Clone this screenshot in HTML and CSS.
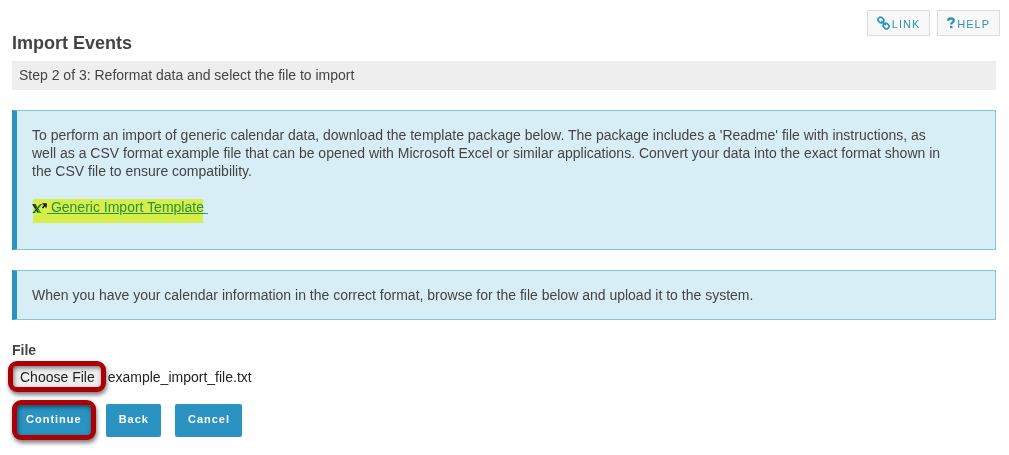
FILE: index.html
```html
<!DOCTYPE html>
<html lang="en">
<head>
<meta charset="utf-8">
<title>Import Events</title>
<link rel="stylesheet" href="styles.css">
</head>
<body>
<header class="header">
  <h1 class="title">Import Events</h1>
  <nav class="tools">
    <a class="tool" href="#link"><svg class="tool-icon" viewBox="0 0 13 14" aria-hidden="true"><g fill="none" stroke="currentColor" stroke-width="1.7"><rect x="1" y="1.6" width="5.8" height="4.8" rx="2.2" transform="rotate(40 3.9 4)"/><rect x="6.2" y="7.6" width="5.8" height="4.8" rx="2.2" transform="rotate(40 9.1 10)"/><path d="M4.4 5.2l4.4 3.8"/></g></svg>LINK</a>
    <a class="tool" href="#help"><svg class="tool-icon tool-icon-help" viewBox="0 0 8 12" aria-hidden="true"><path d="M1 3.8C1.3 1.9 2.4 1.5 4 1.5s2.7.8 2.7 2.1c0 1.8-2.5 1.8-2.5 3.9" fill="none" stroke="currentColor" stroke-width="2.3"/><path d="M3 8.8h2.4v2.4H3z" fill="currentColor"/></svg>HELP</a>
  </nav>
</header>
<main class="main">
  <p class="step">Step 2 of 3: Reformat data and select the file to import</p>
  <section class="notice notice-template">
    <p class="notice-text">To perform an import of generic calendar data, download the template package below. The package includes a 'Readme' file with instructions, as well as a CSV format example file that can be opened with Microsoft Excel or similar applications. Convert your data into the exact format shown in the CSV file to ensure compatibility.</p>
    <p class="notice-text download"><a class="template-link" href="#template"><svg class="excel-icon" viewBox="0 0 15 12" aria-hidden="true"><path d="M0 2h3.5l5.5 9H5.5z" fill="#4a4a50"/><path d="M8 2h2L3 11H0z" fill="#2fb060"/><path d="M6 7.5L9.5 11H6z" fill="#2fb060"/><path d="M1 2.5l5.5 8M9 2.5L1.5 11" stroke="#111" stroke-width="1" stroke-dasharray="1.5 1"/><path d="M10.5 6l3-3.5M10.5 2h3.5v3.5" fill="none" stroke="#111" stroke-width="1.5"/></svg><span class="link-text">&nbsp;Generic Import Template&nbsp;</span></a></p>
  </section>
  <section class="notice">
    <p class="notice-text">When you have your calendar information in the correct format, browse for the file below and upload it to the system.</p>
  </section>
  <form class="form">
    <div class="form-label" id="file-label">File</div>
    <div class="file-row">
      <input class="file-input" type="file" id="file" aria-labelledby="file-label choose-file">
      <label class="choose marked" for="file" id="choose-file">Choose File</label>
      <span class="filename">example_import_file.txt</span>
    </div>
    <div class="actions">
      <span class="ring marked"><button class="button" type="submit">Continue</button></span>
      <button class="button" type="button">Back</button>
      <button class="button" type="button">Cancel</button>
    </div>
  </form>
</main>
</body>
</html>
```
FILE: styles.css
```css
* { box-sizing: border-box; }

body {
  margin: 0;
  background: #fff;
  color: #444;
  font: 14px/18px "Liberation Sans", Arial, sans-serif;
}

.header {
  display: flex;
  justify-content: space-between;
  align-items: flex-start;
  padding: 10px 9px 7px 12px;
}

.title {
  margin: 0;
  padding-top: 23px;
  font-size: 18px;
  line-height: 21px;
}

.tools { display: flex; gap: 7px; }

.tool {
  display: flex;
  align-items: center;
  height: 26px;
  padding: 1px 9px 0;
  border: 1px solid #ddd;
  background: #f8f8f8;
  color: #2a93c1;
  font-size: 11px;
  letter-spacing: 1px;
  text-decoration: none;
}

.tool-icon { width: 13px; height: 14px; margin: 0 2px 2px 0; }
.tool-icon-help { width: 8px; height: 12px; }

.main { padding: 0 13px 16px 12px; }

.step {
  margin: 0 0 20px;
  padding: 5px 7px 6px;
  background: #eee;
}

.notice {
  margin-bottom: 20px;
  padding: 15px 45px 15px 15px;
  border: 1px solid #82c7e3;
  border-left: 5px solid #2a93c1;
  background: #d8eef6;
}

.notice-template { padding-bottom: 31px; }
.notice-text { margin: 0; }
.download { margin-top: 18px; }

.template-link {
  position: relative;
  display: inline-flex;
  color: #2a93c1;
  text-decoration: none;
}

.template-link::after {
  content: "";
  position: absolute;
  top: 1px;
  right: 5px;
  left: 1px;
  height: 24px;
  background: #fcff4c;
  mix-blend-mode: multiply;
}

.link-text { text-decoration: underline; }
.excel-icon { width: 15px; height: 12px; margin-top: 4px; }

.form-label { padding: 1px 0 2px; font-weight: bold; }

.file-row {
  display: flex;
  align-items: center;
  gap: 2px;
  margin-left: -4px;
}

.file-input {
  position: absolute;
  width: 1px;
  height: 1px;
  opacity: 0;
}

.marked {
  border: 5px solid #ad0006;
  border-radius: 9px;
  box-shadow: 1px 3px 4px rgba(0, 0, 0, .5), inset 1px 2px 4px rgba(0, 0, 0, .5);
}

.choose {
  padding: 2px 6px 1px 7px;
  background: #eee;
  color: #222;
}

.filename { padding-top: 1px; color: #222; }

.actions {
  display: flex;
  align-items: center;
  margin-top: 8px;
}

.ring {
  display: flex;
  margin-right: 10px;
  background: #2a93c1;
}

.button {
  height: 33px;
  margin-right: 14px;
  padding: 0 12px 2px 13px;
  border: 0;
  border-radius: 2px;
  background: #2a93c1;
  color: #fff;
  font: bold 11px/16px "Liberation Sans", Arial, sans-serif;
  letter-spacing: 1px;
}

.ring .button {
  height: 30px;
  margin: 0;
  padding: 0 9px 2px;
  background: transparent;
}
```
